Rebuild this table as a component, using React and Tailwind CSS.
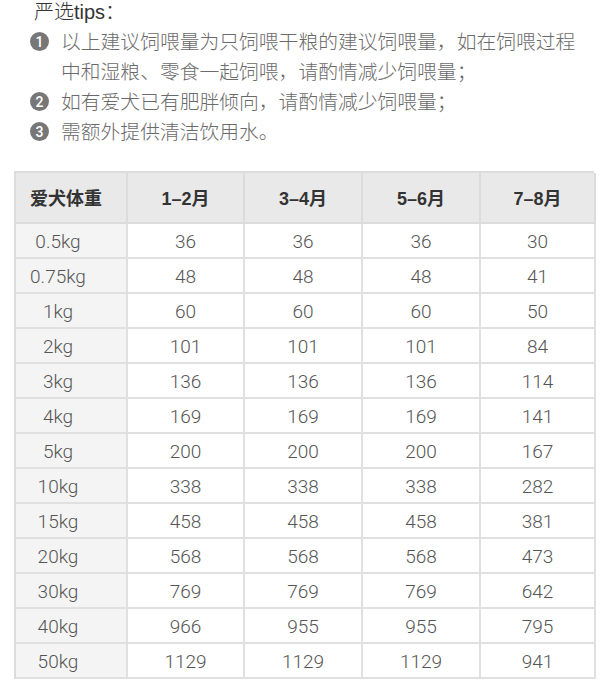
import React from "react";

const rows = [
  ["0.5kg", "36", "36", "36", "30"],
  ["0.75kg", "48", "48", "48", "41"],
  ["1kg", "60", "60", "60", "50"],
  ["2kg", "101", "101", "101", "84"],
  ["3kg", "136", "136", "136", "114"],
  ["4kg", "169", "169", "169", "141"],
  ["5kg", "200", "200", "200", "167"],
  ["10kg", "338", "338", "338", "282"],
  ["15kg", "458", "458", "458", "381"],
  ["20kg", "568", "568", "568", "473"],
  ["30kg", "769", "769", "769", "642"],
  ["40kg", "966", "955", "955", "795"],
  ["50kg", "1129", "1129", "1129", "941"],
];

const headers = ["爱犬体重", "1–2月", "3–4月", "5–6月", "7–8月"];

const cjk = { fontFamily: '"Helvetica Neue", "Liberation Sans", "Noto Sans CJK SC", sans-serif' };
const num = { fontFamily: 'Roboto, "Liberation Sans", "Noto Sans CJK SC", sans-serif' };

function Badge({ n }) {
  return (
    <span
      className="mt-[5px] mr-[12px] flex h-[19px] w-[19px] min-w-[19px] shrink-0 items-center justify-center rounded-full bg-[#777777] text-[14px] font-medium leading-none text-white"
      style={num}
    >
      {n}
    </span>
  );
}

export default function App() {
  return (
    <div className="h-[682px] w-[600px] overflow-hidden bg-white" style={cjk}>
      <div className="pl-[30px]">
        <div className="pl-[4px] text-[20px] font-light leading-[24px] text-[#333]">严选tips：</div>
        <div className="mt-[3px] text-[19.8px] font-light leading-[30px] text-[#6a6a6a]">
          <div className="flex">
            <Badge n="1" />
            <div className="w-[530px]">以上建议饲喂量为只饲喂干粮的建议饲喂量，如在饲喂过程中和湿粮、零食一起饲喂，请酌情减少饲喂量；</div>
          </div>
          <div className="flex">
            <Badge n="2" />
            <div>如有爱犬已有肥胖倾向，请酌情减少饲喂量；</div>
          </div>
          <div className="flex">
            <Badge n="3" />
            <div>需额外提供清洁饮用水。</div>
          </div>
        </div>
      </div>

      <div className="ml-[14px] mt-[24px] grid w-[580px] grid-cols-[112px_117px_118px_118px_115px] border-l-2 border-t-2 border-[#dcdcdc]">
        {headers.map((h, i) => (
          <div
            key={h}
            className={`flex h-[51px] items-center justify-center border-b-2 border-r-2 border-[#dcdcdc] bg-[#e9e9e9] pt-[4px] text-[18px] font-bold text-[#333] ${i === 0 ? "pr-[10px]" : ""}`}
            style={i === 0 ? cjk : { fontFamily: '"Liberation Sans", "Noto Sans CJK SC", sans-serif' }}
          >
            {h}
          </div>
        ))}
        {rows.map((r) =>
          r.map((c, i) => (
            <div
              key={r[0] + i}
              className={`flex h-[35px] items-center justify-center border-b-2 border-r-2 border-[#e0e0e0] pt-[4px] text-[19px] font-light text-[#555] ${i === 0 ? "bg-[#f4f4f4] pr-[26px]" : "bg-white"}`}
              style={num}
            >
              {c}
            </div>
          ))
        )}
      </div>
    </div>
  );
}
